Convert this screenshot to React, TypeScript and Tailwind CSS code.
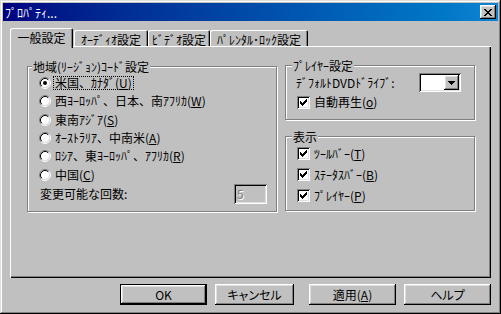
import React from "react";

const raised =
  "shadow-[inset_-1px_-1px_#000,inset_1px_1px_#fff,inset_-2px_-2px_#808080,inset_2px_2px_#dfdfdf]";
const sunken =
  "shadow-[inset_1px_1px_#808080,inset_-1px_-1px_#fff,inset_2px_2px_#000,inset_-2px_-2px_#dfdfdf]";
const etched = "border border-[#808080] shadow-[1px_1px_#fff,inset_1px_1px_#fff]";

// check mark columns: [x, top y], each 3px tall
const CHECK: [number, number][] = [
  [0, 2],
  [1, 3],
  [2, 4],
  [3, 3],
  [4, 2],
  [5, 1],
  [6, 0],
];

function Radio({ checked }: { checked?: boolean }) {
  return (
    <svg width="12" height="12" viewBox="0 0 12 12" className="shrink-0">
      <circle cx="6" cy="6" r="4.5" fill="#fff" />
      <path d="M2.11 9.89A5.5 5.5 0 0 1 9.89 2.11" stroke="#808080" fill="none" />
      <path d="M9.89 2.11A5.5 5.5 0 0 1 2.11 9.89" stroke="#fff" fill="none" />
      <path d="M2.82 9.18A4.5 4.5 0 0 1 9.18 2.82" stroke="#000" fill="none" />
      <path d="M9.18 2.82A4.5 4.5 0 0 1 2.82 9.18" stroke="#dfdfdf" fill="none" />
      {checked && <circle cx="6" cy="6" r="2" fill="#000" />}
    </svg>
  );
}

function CheckBox({ checked }: { checked?: boolean }) {
  return (
    <span className={`flex h-[13px] w-[13px] shrink-0 items-center justify-center bg-white ${sunken}`}>
      {checked && (
        <svg width="7" height="7" viewBox="0 0 7 7" shapeRendering="crispEdges">
          {CHECK.map(([x, y]) => (
            <rect key={x} x={x} y={y} width="1" height="3" fill="#000" />
          ))}
        </svg>
      )}
    </span>
  );
}

function GroupBox({
  label,
  labelLeft,
  className,
  children,
}: {
  label: string;
  labelLeft: string;
  className: string;
  children: React.ReactNode;
}) {
  return (
    <div className={`relative ${etched} ${className}`}>
      <span className={`absolute -top-[7px] bg-[#c0c0c0] px-[1px] ${labelLeft}`}>{label}</span>
      {children}
    </div>
  );
}

function Label({ text, acc, focused }: { text: string; acc: string; focused?: boolean }) {
  return (
    <span
      className={`ml-[2px] border px-[1px] leading-[12px] ${
        focused ? "border-dotted border-black" : "border-transparent"
      }`}
    >
      {text}(<u>{acc}</u>)
    </span>
  );
}

const regions = [
  { text: "米国、ｶﾅﾀﾞ", acc: "U" },
  { text: "西ﾖｰﾛｯﾊﾟ、日本、南ｱﾌﾘｶ", acc: "W" },
  { text: "東南ｱｼﾞｱ", acc: "S" },
  { text: "ｵｰｽﾄﾗﾘｱ、中南米", acc: "A" },
  { text: "ﾛｼｱ、東ﾖｰﾛｯﾊﾟ、ｱﾌﾘｶ", acc: "R" },
  { text: "中国", acc: "C" },
];

const views = [
  { text: "ﾂｰﾙﾊﾞｰ", acc: "T" },
  { text: "ｽﾃｰﾀｽﾊﾞｰ", acc: "B" },
  { text: "ﾌﾟﾚｲﾔｰ", acc: "P" },
];

const tabs = [
  { label: "ｵｰﾃﾞｨｵ設定", w: "ml-[1px] w-[74px]" },
  { label: "ﾋﾞﾃﾞｵ設定", w: "w-[62px]" },
  { label: "ﾊﾟﾚﾝﾀﾙ･ﾛｯｸ設定", w: "w-[98px]" },
];

function Button({ children, className }: { children: React.ReactNode; className: string }) {
  return (
    <button
      className={`flex h-[21px] items-center justify-center bg-[#c0c0c0] [font-feature-settings:'palt'] ${className}`}
    >
      {children}
    </button>
  );
}

export default function App() {
  return (
    <div
      className="flex h-[314px] w-[501px] flex-col bg-[#c0c0c0] p-[3px] font-['Noto_Sans_CJK_JP',sans-serif] text-[12px] leading-[13px] text-black shadow-[inset_-1px_-1px_#000,inset_1px_1px_#dfdfdf,inset_-2px_-2px_#808080,inset_2px_2px_#fff]"
    >
      {/* Title bar */}
      <div className="flex h-[18px] items-center bg-linear-to-r from-[#000080] to-[#1084d0] px-[2px]">
        <span className="text-white">ﾌﾟﾛﾊﾟﾃｨ...</span>
        <span className={`ml-auto flex h-[14px] w-[16px] items-center justify-center bg-[#c0c0c0] ${raised}`}>
          <svg width="8" height="7" viewBox="0 0 8 7" shapeRendering="crispEdges">
            <path
              d="M0 0h2v1H0z M6 0h2v1H6z M1 1h2v1H1z M5 1h2v1H5z M2 2h4v1H2z M3 3h2v1H3z M2 4h4v1H2z M1 5h2v1H1z M5 5h2v1H5z M0 6h2v1H0z M6 6h2v1H6z"
              fill="#000"
            />
          </svg>
        </span>
      </div>

      {/* Tabs */}
      <div className="mt-[7px] flex h-[18px] items-end pl-[7px]">
        <div className="relative z-10 -mb-[2px] flex h-[20px] w-[63px] items-start justify-center rounded-t-[2px] bg-[#c0c0c0] pt-[3px] shadow-[inset_1px_1px_#fff,inset_-1px_0_#000,inset_-2px_0_#808080]">
          一般設定
        </div>
        {tabs.map((t) => (
          <div
            key={t.label}
            className={`flex h-[16px] items-start justify-center rounded-t-[2px] pt-[3px] shadow-[inset_1px_1px_#fff,inset_-1px_0_#000,inset_-2px_0_#808080] ${t.w}`}
          >
            {t.label}
          </div>
        ))}
      </div>

      {/* Tab panel */}
      <div className="ml-[7px] flex h-[232px] w-[481px] items-start pl-[17px] shadow-[inset_1px_1px_#fff,inset_-1px_-1px_#000,inset_-2px_-2px_#808080]">
        <GroupBox
          label="地域(ﾘｰｼﾞｮﾝ)ｺｰﾄﾞ設定"
          labelLeft="left-[4px]"
          className="mt-[20px] h-[146px] w-[250px] pl-[11px] pt-[7px]"
        >
          {regions.map((r, i) => (
            <div key={r.acc} className="flex h-[18.3px] items-center">
              <Radio checked={i === 0} />
              <Label text={r.text} acc={r.acc} focused={i === 0} />
            </div>
          ))}
          <div className="flex h-[20px] items-center">
            <span className="ml-[1px]">変更可能な回数:</span>
            <span className={`ml-auto mr-[9px] flex h-[20px] w-[33px] items-center pl-[3px] text-[#808080] [text-shadow:1px_1px_0_#fff] ${sunken}`}>
              5
            </span>
          </div>
        </GroupBox>

        <div className="ml-[8px] flex flex-col">
          <GroupBox
            label="ﾌﾟﾚｲﾔｰ設定"
            labelLeft="left-[6px]"
            className="mt-[19px] h-[55px] w-[190px] pt-[7px]"
          >
            <div className="flex h-[19px] items-center pl-[10px] pr-[13px]">
              <span>ﾃﾞﾌｫﾙﾄDVDﾄﾞﾗｲﾌﾞ:</span>
              <span className={`ml-auto flex h-[19px] w-[42px] justify-end bg-white p-[2px] ${sunken}`}>
                <span className={`flex w-[15px] items-center justify-center bg-[#c0c0c0] ${raised}`}>
                  <svg width="7" height="4" viewBox="0 0 7 4" shapeRendering="crispEdges">
                    <path d="M0 0h7v1H0z M1 1h5v1H1z M2 2h3v1H2z M3 3h1v1H3z" fill="#000" />
                  </svg>
                </span>
              </span>
            </div>
            <div className="flex h-[20px] items-center pl-[11px]">
              <CheckBox checked />
              <Label text="自動再生" acc="o" />
            </div>
          </GroupBox>

          <GroupBox label="表示" labelLeft="left-[6px]" className="mt-[16px] h-[75px] w-[190px] pl-[11px] pt-[6px]">
            {views.map((v) => (
              <div key={v.acc} className="flex h-[21px] items-center">
                <CheckBox checked />
                <Label text={v.text} acc={v.acc} />
              </div>
            ))}
          </GroupBox>
        </div>
      </div>

      {/* Dialog buttons */}
      <div className="mt-[6px] flex justify-end pr-[7px]">
        <Button className={`w-[87px] border border-black ${raised}`}>OK</Button>
        <Button className={`ml-[8px] w-[79px] ${raised}`}>キャンセル</Button>
        <Button className={`ml-[15px] w-[87px] ${raised}`}>
          適用(<u>A</u>)
        </Button>
        <Button className={`ml-[8px] w-[87px] ${raised}`}>ヘルプ</Button>
      </div>
    </div>
  );
}
